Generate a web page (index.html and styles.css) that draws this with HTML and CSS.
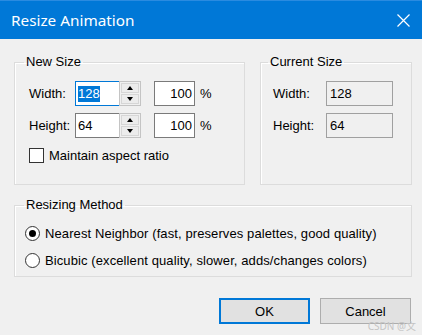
FILE: index.html
```html
<!DOCTYPE html>
<html lang="en">
<head>
  <meta charset="UTF-8" />
  <title>Resize Animation</title>
  <link rel="stylesheet" href="styles.css">
</head>
<body>
  <div class="dialog">
    <div class="titlebar">
      <span class="title">Resize Animation</span>
      <svg class="close" width="13" height="13" viewBox="0 0 13 13">
        <path d="M0.5 0.5 L12.5 12.5 M12.5 0.5 L0.5 12.5" stroke="#fff" stroke-width="1.2" fill="none" />
      </svg>
    </div>

    <div class="content">
      <div class="top-row">
        <fieldset class="group new-size">
          <legend>New Size</legend>
          <div class="field-row">
            <span class="field-label">Width:</span>
            <div class="textbox size-box focused"><span class="selected">128</span></div>
            <div class="spinner">
              <span class="spin-btn"><span class="arrow up"></span></span>
              <span class="spin-btn"><span class="arrow down"></span></span>
            </div>
            <div class="textbox pct-box">100</div>
            <span class="pct">%</span>
          </div>
          <div class="field-row">
            <span class="field-label">Height:</span>
            <div class="textbox size-box">64</div>
            <div class="spinner">
              <span class="spin-btn"><span class="arrow up"></span></span>
              <span class="spin-btn"><span class="arrow down"></span></span>
            </div>
            <div class="textbox pct-box">100</div>
            <span class="pct">%</span>
          </div>
          <div class="check-row">
            <span class="checkbox"></span>
            <span>Maintain aspect ratio</span>
          </div>
        </fieldset>

        <fieldset class="group current-size">
          <legend>Current Size</legend>
          <div class="field-row">
            <span class="cur-label">Width:</span>
            <div class="textbox readonly">128</div>
          </div>
          <div class="field-row">
            <span class="cur-label">Height:</span>
            <div class="textbox readonly">64</div>
          </div>
        </fieldset>
      </div>

      <fieldset class="group method">
        <legend>Resizing Method</legend>
        <div class="radio-row">
          <span class="radio checked"></span>
          <span>Nearest Neighbor (fast, preserves palettes, good quality)</span>
        </div>
        <div class="radio-row">
          <span class="radio"></span>
          <span>Bicubic (excellent quality, slower, adds/changes colors)</span>
        </div>
      </fieldset>

      <div class="buttons">
        <button class="btn default">OK</button>
        <button class="btn">Cancel</button>
      </div>
    </div>

    <span class="watermark">CSDN @文</span>
  </div>
</body>
</html>
```

FILE: styles.css
```css
body {
  margin: 0;
  padding: 0;
  background-color: #f0f0f0;
}

.dialog {
  position: relative;
  width: 422px;
  height: 335px;
  background-color: #f0f0f0;
  font-family: "Liberation Sans", Arial, sans-serif;
  font-size: 13px;
  color: #000;
  overflow: hidden;
}

/* Title bar */
.titlebar {
  height: 38px;
  border-top: 1px solid #2a8be0;
  background-color: #0078d7;
  display: flex;
  align-items: center;
  justify-content: space-between;
  padding: 0 12px 0 11px;
}

.title {
  color: #fff;
  font-family: "Noto Sans", sans-serif;
  font-size: 15.3px;
  margin-top: -1px;
}

.close {
  display: block;
}

/* Body */
.content {
  padding: 16px 10px 0 14px;
}

.top-row {
  display: flex;
  gap: 15px;
}

.group {
  margin: 0;
  border: 1px solid #dcdcdc;
  box-shadow: inset 1px 1px 0 #fff;
  box-sizing: border-box;
}

.group legend {
  padding: 0 2px;
  line-height: 14px;
}

.new-size {
  width: 231px;
  height: 130px;
  padding: 12px 0 0 14px;
}

.new-size legend {
  margin-left: -5px;
}

.current-size {
  width: 152px;
  height: 130px;
  padding: 12px 0 0 12px;
}

.current-size legend {
  margin-left: -5px;
}

.field-row {
  display: flex;
  align-items: center;
  height: 25px;
  margin-bottom: 7px;
}

.field-label {
  width: 46px;
}

.cur-label {
  width: 53px;
}

.textbox {
  box-sizing: border-box;
  height: 25px;
  border: 1px solid #7a7a7a;
  background-color: #fff;
  display: flex;
  align-items: center;
  padding: 0 2px;
}

.size-box {
  width: 44px;
  border-right: none;
}

.size-box.focused {
  border-color: #0078d7;
}

.selected {
  background-color: #0078d7;
  color: #fff;
  line-height: 16px;
}

.spinner {
  box-sizing: border-box;
  width: 22px;
  height: 25px;
  border: 1px solid #c4c4c4;
  display: flex;
  flex-direction: column;
  gap: 1px;
  padding: 1px;
  background-color: #f0f0f0;
}

.spin-btn {
  flex: 1;
  border: 1px solid #d6d6d6;
  background-color: #ececec;
  display: flex;
  align-items: center;
  justify-content: center;
}

.arrow {
  width: 0;
  height: 0;
  border-left: 3.5px solid transparent;
  border-right: 3.5px solid transparent;
}

.arrow.up {
  border-bottom: 4px solid #000;
}

.arrow.down {
  border-top: 4px solid #000;
}

.pct-box {
  width: 41px;
  margin-left: 13px;
  justify-content: flex-end;
  padding-right: 2px;
}

.pct {
  margin-left: 5px;
}

.readonly {
  width: 67px;
  background-color: #f0f0f0;
  border-color: #a0a0a0;
  padding-left: 3px;
}

.check-row {
  display: flex;
  align-items: center;
  gap: 5px;
  margin-top: 10px;
}

.checkbox {
  box-sizing: border-box;
  width: 15px;
  height: 15px;
  border: 1px solid #333;
  background-color: #fff;
}

/* Resizing method */
.method {
  width: 398px;
  height: 79px;
  margin-top: 13px;
  padding: 13px 0 0 10px;
}

.method legend {
  margin-left: -1px;
}

.radio-row {
  display: flex;
  align-items: center;
  gap: 5px;
  height: 16px;
  margin-bottom: 11px;
  letter-spacing: 0.1px;
}

.radio {
  box-sizing: border-box;
  width: 15px;
  height: 15px;
  border: 1px solid #333;
  border-radius: 50%;
  background-color: #fff;
  display: flex;
  align-items: center;
  justify-content: center;
}

.radio.checked::after {
  content: "";
  width: 7px;
  height: 7px;
  border-radius: 50%;
  background-color: #000;
}

/* Buttons */
.buttons {
  display: flex;
  justify-content: flex-end;
  gap: 10px;
  margin-top: 21px;
  padding-right: 1px;
}

.btn {
  box-sizing: border-box;
  width: 91px;
  height: 26px;
  border: 1px solid #adadad;
  background-color: #e1e1e1;
  font-family: "Liberation Sans", Arial, sans-serif;
  font-size: 13px;
  color: #000;
  padding: 0;
}

.btn.default {
  border: 2px solid #0078d7;
}

.watermark {
  position: absolute;
  right: 6px;
  bottom: 3px;
  font-size: 10px;
  line-height: 12px;
  color: #c4c4c4;
  font-family: "Noto Sans", "Noto Sans CJK SC", sans-serif;
}
```
